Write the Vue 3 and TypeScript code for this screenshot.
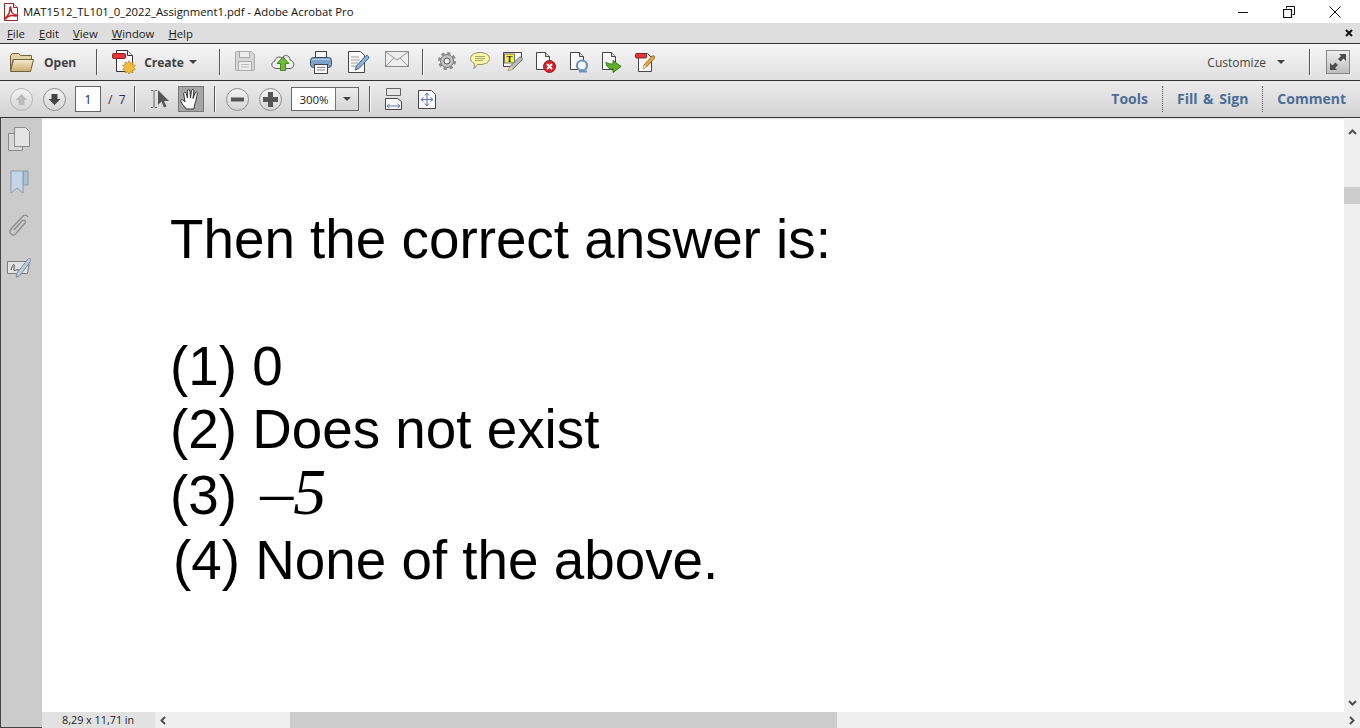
<template>
  <div class="app">
    <header class="titlebar">
      <svg class="title-icon" width="16" height="18" viewBox="0 0 16 18">
        <path d="M1.500 .5h9l4 4v13h-13z" fill="#fff" stroke="#8c2a2a" />
        <path d="M10.500 .5v4h4" fill="#f2dede" stroke="#8c2a2a" />
        <path d="M2 15c3-2 5-6 5-10 0-2 1-1 1 1 0 3 2 6 6 6 1 1-1 1-2 1-3-1-7 0-10 3z" fill="none" stroke="#c8201e" stroke-width="1.500" />
      </svg>
      <span class="title-text">MAT1512_TL101_0_2022_Assignment1.pdf - Adobe Acrobat Pro</span>
      <div class="win-controls">
        <svg width="12" height="12" viewBox="0 0 12 12"><path d="M1 6.500h10" stroke="#111" /></svg>
        <svg width="12" height="12" viewBox="0 0 12 12" fill="none" stroke="#111"><path d="M3.500 2.500v-2h8v8h-2" /><path d="M.5 3.500h8v8h-8z" stroke-width="1.200" /></svg>
        <svg width="12" height="12" viewBox="0 0 12 12"><path d="M.5 .5l11 11M11.500 .5l-11 11" stroke="#111" /></svg>
      </div>
    </header>

    <nav class="menubar">
      <span v-for="m in menus" :key="m.rest" class="menu-item"><u>{{ m.key }}</u>{{ m.rest }}</span>
      <svg class="menu-close" width="8" height="8" viewBox="0 0 8 8"><path d="M1 1l6 6M7 1L1 7" stroke="#111" stroke-width="2" /></svg>
    </nav>

    <div class="toolbar toolbar-main">
      <svg width="24" height="21" viewBox="0 0 24 21">
        <defs>
          <linearGradient id="folderFill" x1="0" y1="0" x2="0" y2="1"><stop offset="0" stop-color="#f4ead0" /><stop offset="1" stop-color="#c9ae6e" /></linearGradient>
        </defs>
        <path d="M.5 19V3.500l2-2h6l2 2h11v4H3z" fill="#e3d3a4" stroke="#6f6240" />
        <path d="M.5 19.500l3-12h20l-3 12z" fill="url(#folderFill)" stroke="#6f6240" />
      </svg>
      <span class="tb-label open-label">Open</span>
      <i class="sep sep-open"></i>
      <svg width="24" height="24" viewBox="0 0 24 24">
        <path d="M4.500 .5h11l5 5v16h-16z" fill="#fafafa" stroke="#333" />
        <path d="M15.500 .5v5h5" fill="#e8e8e8" stroke="#333" />
        <rect x=".5" y="3.500" width="13" height="5" rx="1" fill="#e4343c" stroke="#8e2027" />
        <polygon :points="star(17, 17.5, 6.8, 4.6, 10)" fill="#f2bb38" stroke="#a57c1e" stroke-width=".6" />
      </svg>
      <span class="tb-label create-label">Create</span>
      <i class="caret create-caret"></i>
      <i class="sep sep-create"></i>

      <div class="tool-group wide">
        <span class="tool">
          <svg width="20" height="20" viewBox="0 0 20 20"><path d="M.5 1.500a1 1 0 0 1 1-1h15l3 3v15a1 1 0 0 1-1 1h-17a1 1 0 0 1-1-1z" fill="#d6d6d6" stroke="#aaa" /><rect x="4.500" y=".5" width="10" height="6" fill="#ececec" stroke="#aaa" /><rect x="3.500" y="10.500" width="13" height="9" fill="#ececec" stroke="#aaa" /><path d="M6 13.500h8M6 16h8" stroke="#bbb" /></svg>
        </span>
        <span class="tool">
          <svg width="24" height="20" viewBox="0 0 24 20"><path d="M6 17.500c-6 0-7-6-2-7.500 0-4 5-5 7-3 2-4 8-3 8 2 5 1 5 8.500 0 8.500z" fill="#f0f0f0" stroke="#5c5c5c" /><path d="M12 6l6 6.500h-3.500v7h-5v-7H6z" fill="#73bb35" stroke="#3f8a1d" /></svg>
        </span>
        <span class="tool">
          <svg width="22" height="23" viewBox="0 0 22 23"><rect x="5.500" y=".5" width="11" height="8" fill="#f7f7f7" stroke="#444" /><rect x=".5" y="6.500" width="21" height="10" rx="3" fill="#7da3c8" stroke="#3c4f68" /><path d="M2 8.500h18" stroke="#b6d0e6" /><rect x="4.500" y="13.500" width="13" height="9" fill="#fafafa" stroke="#444" /><path d="M7 16.500h8M7 19h8" stroke="#888" /></svg>
        </span>
        <span class="tool">
          <svg width="22" height="22" viewBox="0 0 22 22"><path d="M.5 .5h12l4 4v17H.5z" fill="#fafafa" stroke="#444" /><path d="M3 6h8M3 9h9M3 12h7M3 15h5" stroke="#999" /><path d="M7 19l1.500-4 9-10c2-1.500 4 .5 3 2.500l-9.500 10z" fill="#8fb2da" stroke="#2e4a70" stroke-width=".8" /></svg>
        </span>
        <span class="tool">
          <svg width="24" height="16" viewBox="0 0 24 16"><rect x=".5" y=".5" width="23" height="15" fill="#eee" stroke="#8a8a8a" /><path d="M1 1l11 8 11-8M1 15l8-8M23 15l-8-8" fill="none" stroke="#999" /></svg>
        </span>
      </div>
      <i class="sep sep-tools"></i>

      <div class="tool-group">
        <span class="tool">
          <svg width="18" height="18" viewBox="0 0 18 18"><circle cx="9" cy="9" r="6.500" fill="#c4c4c4" stroke="#707070" /><circle cx="9" cy="9" r="7.500" fill="none" stroke="#8a8a8a" stroke-width="3" stroke-dasharray="3.200 2.690" /><circle cx="9" cy="9" r="3" fill="#f0f0f0" stroke="#5a5a5a" /></svg>
        </span>
        <span class="tool">
          <svg width="20" height="18" viewBox="0 0 20 18"><path d="M10 .5c5.500 0 9.500 2.500 9.500 6S15.500 12.500 10 12.500c-1 0-2 0-2.500-.2-.8 1.800-2 3.500-4 4.200 1-1.500 1-3.200.8-5C2 10.500.5 8.500.5 6.500.5 3 4.500.5 10 .5z" fill="#fbf7a8" stroke="#8c8b6a" /><path d="M5 4.500h10M5 6.500h10M5 8.500h8" stroke="#a5a46a" /></svg>
        </span>
        <span class="tool">
          <svg width="20" height="19" viewBox="0 0 20 19"><path d="M.5 .5h18v6l-7 8H.5z" fill="#fafafa" stroke="#444" /><rect x="1.500" y="2" width="10" height="9" fill="#f9f230" stroke="#777" /><text class="t-glyph" x="6.500" y="9.500" text-anchor="middle">T</text><path d="M5 18.500l2-4 9-9c2-1.500 4 .5 3 2.500l-9 9z" fill="#bbb" stroke="#555" stroke-width=".8" /><path d="M5 18.500l2-4 3 2.500z" fill="#f4dc7c" /></svg>
        </span>
        <span class="tool">
          <svg width="20" height="21" viewBox="0 0 20 21"><path d="M.5 .5h9l4 4v13H.5z" fill="#fafafa" stroke="#444" /><path d="M9.500 .5v4h4" fill="#ddd" stroke="#444" /><circle cx="13.500" cy="14.500" r="6" fill="#d8222a" stroke="#8e1a1e" /><path d="M11 12l5 5M16 12l-5 5" stroke="#fff" stroke-width="1.800" /></svg>
        </span>
        <span class="tool">
          <svg width="19" height="21" viewBox="0 0 19 21"><path d="M.5 .5h9l4 4v13H.5z" fill="#fafafa" stroke="#444" /><path d="M9.500 .5v4h4" fill="#ddd" stroke="#444" /><circle cx="12" cy="13.500" r="5" fill="#f4f8fc" stroke="#6a93b8" stroke-width="2.200" /><path d="M9 19.500h2.500l.5-2 .5 2H17" fill="none" stroke="#6a93b8" stroke-width="1.800" /></svg>
        </span>
        <span class="tool">
          <svg width="20" height="21" viewBox="0 0 20 21"><path d="M.5 .5h9l4 4v13H.5z" fill="#fafafa" stroke="#444" /><path d="M9.500 .5v4h4" fill="#ddd" stroke="#444" /><path d="M4 10c0 5 3 7 7 7v3.500l8-6-8-6V12C8 12 6 12 4 10z" fill="#63ad2e" stroke="#3b7a1a" /></svg>
        </span>
        <span class="tool">
          <svg width="20" height="20" viewBox="0 0 20 20"><path d="M3.500 1.500h9l4 4v14h-13z" fill="#fafafa" stroke="#444" /><rect x=".5" y="1.500" width="11" height="4.500" rx="1" fill="#e4343c" stroke="#8e2027" /><path d="M8 17l1-4 8-9c1.500-1 3.500 .5 2.500 2l-8 9z" fill="#eda63a" stroke="#8a5a1e" stroke-width=".8" /><path d="M8 17l1-4 2.500 2z" fill="#f7e3b8" /></svg>
        </span>
      </div>

      <span class="customize">Customize</span>
      <i class="caret customize-caret"></i>
      <i class="sep sep-expand"></i>
      <span class="expand-box">
        <svg width="18" height="18" viewBox="0 0 18 18" fill="#4c4c4c"><path d="M10 1h7v7l-2.500-2.500-3 3-2.500-2.500 3-3zM8 17H1v-7l2.500 2.500 3-3 2.500 2.500-3 3z" /></svg>
      </span>
    </div>

    <div class="toolbar toolbar-nav">
      <span class="round disabled">
        <svg width="13" height="13" viewBox="0 0 13 13"><path d="M6.500 1l6 6H9.500v5h-6V7H.5z" fill="#bbb" /></svg>
      </span>
      <span class="round round-down">
        <svg width="13" height="13" viewBox="0 0 13 13"><path d="M6.500 12l6-6H9.500V1h-6v5H.5z" fill="#444" /></svg>
      </span>
      <span class="page-input">1</span>
      <span class="page-total">/&nbsp; 7</span>
      <i class="sep sep-page"></i>
      <svg class="select-icon" width="19" height="20" viewBox="0 0 19 20">
        <path d="M1 1.500h2l1 1 1-1h2M4 2.500v15M1 18.500h2l1-1 1 1h2" fill="none" stroke="#666" />
        <path d="M8 1v15l3.500-3.500 2.500 6 2.500-1-2.500-5.500h5z" fill="#555" />
      </svg>
      <span class="hand-box">
        <svg width="22" height="22" viewBox="0 0 22 22"><path d="M6 21c-1-2-4-5-5.200-7.500-.6-1.600 1.200-2.500 2.400-1.300L5 14 3.700 6c-.3-1.800 2-2.300 2.500-.5L7.500 10 7.300 3c0-1.800 2.500-1.800 2.600 0l.6 7 1-7.500c.3-1.700 2.600-1.300 2.400.4L13 10.500l2-5.500c.6-1.600 2.800-.8 2.300.8C16.500 9.500 16 13 15 15.500c-.5 2-1 3.500-1 5.500z" fill="#fdfdfd" stroke="#333" /></svg>
      </span>
      <i class="sep sep-hand"></i>
      <span class="round">
        <svg width="13" height="13" viewBox="0 0 13 13"><rect y="4.500" width="13" height="4" fill="#555" /></svg>
      </span>
      <span class="round round-plus">
        <svg width="15" height="15" viewBox="0 0 15 15"><path d="M5 0h5v5h5v5h-5v5H5v-5H0V5h5z" fill="#555" /></svg>
      </span>
      <span class="zoom-combo">
        <span class="zoom-value">300%</span>
        <span class="zoom-btn"><i class="caret"></i></span>
      </span>
      <i class="sep sep-zoom"></i>
      <svg class="fit-page" width="17" height="22" viewBox="0 0 17 22">
        <path d="M1.500 .5h14v7h-14z" fill="#e6e6e6" stroke="#444" stroke-width=".8" />
        <path d="M.5 10.500h12l4 3v8H.5z" fill="#f8f8f8" stroke="#444" />
        <path d="M2 18h13M2 18l2.500-2M2 18l2.500 2M15 18l-2.500-2M15 18l-2.500 2" fill="none" stroke="#5d78b8" />
      </svg>
      <svg class="fit-full" width="18" height="19" viewBox="0 0 18 19">
        <path d="M.5 .5h13l4 4v14H.5z" fill="#fafafa" stroke="#444" />
        <path d="M9 3v13M3 9.500h12M9 3L7 5.500M9 3l2 2.500M9 16l-2-2.500M9 16l2-2.500M3 9.500l2.500-2M3 9.500l2.500 2M15 9.500l-2.500-2M15 9.500l-2.500 2" fill="none" stroke="#5d78b8" />
      </svg>
      <div class="panes">
        <span class="pane">Tools</span>
        <span class="pane dotted fill-sign">Fill &amp; Sign</span>
        <span class="pane dotted">Comment</span>
      </div>
    </div>

    <div class="workspace">
      <aside class="sidebar">
        <svg width="22" height="24" viewBox="0 0 22 24"><path d="M.5 6.500h14v17H.5z" fill="#d8d8d8" stroke="#8a8a8a" /><path d="M6.500 .5h11l4 4v15h-15z" fill="#e4e4e4" stroke="#8a8a8a" /></svg>
        <svg width="19" height="24" viewBox="0 0 19 24"><path d="M13 1h5v14h-5z" fill="#a9bfd2" stroke="#8a9aa8" /><path d="M1 1h12v22l-6-5-6 5z" fill="#c4d6e6" stroke="#8a9aa8" /></svg>
        <svg width="22" height="24" viewBox="0 0 22 24" fill="none" stroke="#8e8e8e" stroke-width="1.400"><path d="M20 4c-1.500-2.500-4-2.500-6 0L3 16c-3 4 1.500 8 5 4.500L17 10c1.500-2-1-4-3-2l-8 9" /></svg>
        <svg width="24" height="23" viewBox="0 0 24 23"><path d="M.5 5.500h22l-2 12H.5z" fill="#e2e2e2" stroke="#7d7d7d" /><path d="M4 14c2-7 4-7 3-2s2 1 3 2H15" fill="none" stroke="#444" /><path d="M9 21l1-4 11-14c2-1.500 4 .5 2.500 2.500L12.500 20z" fill="#b6cde2" stroke="#7d8c9c" /></svg>
      </aside>

      <main class="page">
        <p class="doc-line heading">Then the correct answer is:</p>
        <p class="doc-line first">(1) 0</p>
        <p class="doc-line second">(2) Does not exist</p>
        <p class="doc-line third">(3) <span class="math"><span class="math-dash">–</span><em>5</em></span></p>
        <p class="doc-line nudged">(4) None of the above.</p>
      </main>

      <div class="v-scroll">
        <svg class="arrow" width="9" height="6" viewBox="0 0 9 6"><path d="M1 5l3.500-3.500L8 5" fill="none" stroke="#505050" stroke-width="2" /></svg>
        <span class="v-thumb"></span>
        <svg class="arrow arrow-end" width="9" height="6" viewBox="0 0 9 6"><path d="M1 1l3.500 3.500L8 1" fill="none" stroke="#505050" stroke-width="2" /></svg>
      </div>
    </div>

    <footer class="bottom">
      <span class="side-foot"></span>
      <span class="page-size">8,29 x 11,71 in</span>
      <div class="h-scroll">
        <svg width="6" height="9" viewBox="0 0 6 9"><path d="M5 1L1.500 4.500 5 8" fill="none" stroke="#505050" stroke-width="2" /></svg>
        <span class="h-thumb"></span>
        <svg class="arrow-end" width="6" height="9" viewBox="0 0 6 9"><path d="M1 1l3.500 3.500L1 8" fill="none" stroke="#505050" stroke-width="2" /></svg>
      </div>
    </footer>
  </div>
</template>

<script setup lang="ts">
const menus = [
  { key: 'F', rest: 'ile' },
  { key: 'E', rest: 'dit' },
  { key: 'V', rest: 'iew' },
  { key: 'W', rest: 'indow' },
  { key: 'H', rest: 'elp' },
]

// points for the little starburst on the Create icon
function star(cx: number, cy: number, outer: number, inner: number, n: number) {
  const pts: string[] = []
  for (let i = 0; i < n * 2; i++) {
    const r = i % 2 ? inner : outer
    const a = (Math.PI * i) / n
    pts.push(`${(cx + r * Math.sin(a)).toFixed(2)},${(cy - r * Math.cos(a)).toFixed(2)}`)
  }
  return pts.join(' ')
}
</script>

<style>
html,
body {
  margin: 0;
  overflow: hidden;
  background: #fff;
}
</style>

<style scoped>
.app {
  display: flex;
  flex-direction: column;
  height: 728px;
  font-family: 'Open Sans', 'Noto Sans', sans-serif;
  font-size: 12px;
  color: #1a1a1a;
  overflow: hidden;
}

.titlebar {
  flex: 0 0 23px;
  display: flex;
  align-items: center;
  background: #fff;
  padding-left: 3px;
}

.title-text {
  margin-left: 4px;
  font-size: 11.3px;
  color: #111;
  white-space: nowrap;
}

.win-controls {
  margin-left: auto;
  display: flex;
  gap: 34px;
  padding-right: 19px;
}

.menubar {
  flex: 0 0 20px;
  display: flex;
  align-items: center;
  background: #dedede;
  padding-left: 7px;
  gap: 14px;
  font-size: 11.3px;
}

.menu-close {
  margin-left: auto;
  margin-right: 7px;
}

.toolbar {
  display: flex;
  align-items: center;
  box-sizing: border-box;
  border-top: 1px solid #333;
}

.toolbar-main {
  flex: 0 0 37px;
  padding-left: 10px;
  background: linear-gradient(#f6f6f6, #dfdfdf);
}

.toolbar-nav {
  flex: 0 0 38px;
  padding-left: 10px;
  background: linear-gradient(#ececec, #d3d3d3);
  border-bottom: 1px solid #333;
}

.tb-label {
  font-weight: 700;
  color: #404040;
}

.open-label {
  margin-left: 10px;
}

.create-label {
  margin-left: 8px;
}

.sep {
  width: 1px;
  height: 26px;
  background: #555;
  box-shadow: 1px 0 0 #fafafa;
  margin: 0 15px;
}

.sep-open {
  margin: 0 15px 0 20px;
}

.sep-create {
  margin-right: 6px;
}

.sep-tools {
  margin: 0 8px 0 6px;
}

.caret {
  width: 0;
  height: 0;
  border: 4px solid transparent;
  border-top: 4px solid #444;
  border-bottom: 0;
}

.create-caret {
  margin-left: 5px;
  margin-right: 7px;
}

.tool-group {
  display: flex;
}

.tool {
  width: 33px;
  display: flex;
  justify-content: center;
}

.tool-group.wide .tool {
  width: 38px;
}

.t-glyph {
  font-family: 'Liberation Serif', serif;
  font-size: 9px;
  font-weight: 700;
  fill: #222;
}

.customize {
  margin-left: auto;
  color: #444;
  font-size: 12px;
}

.customize-caret {
  margin-left: 11px;
}

.sep-expand {
  margin: 0 16px 0 24px;
}

.expand-box {
  width: 24px;
  height: 24px;
  box-sizing: border-box;
  display: flex;
  align-items: center;
  justify-content: center;
  border: 1px solid #888;
  background: linear-gradient(#eee, #bdbdbd);
  margin-right: 10px;
}

.round {
  width: 23px;
  height: 23px;
  box-sizing: border-box;
  border: 1px solid #8e8e8e;
  border-radius: 50%;
  background: linear-gradient(#f4f4f4, #d4d4d4);
  display: flex;
  align-items: center;
  justify-content: center;
}

.round.disabled {
  border-color: #b4b4b4;
}

.round-down {
  margin-left: 10px;
}

.page-input {
  width: 26px;
  height: 26px;
  box-sizing: border-box;
  border: 1px solid #666;
  background: #fff;
  margin-left: 9px;
  display: flex;
  align-items: center;
  justify-content: center;
}

.page-total {
  margin-left: 7px;
  color: #333;
}

.sep-page {
  margin: 0 15px 0 8px;
}

.hand-box {
  width: 26px;
  height: 26px;
  box-sizing: border-box;
  border: 1px solid #777;
  background: #a6a6a6;
  margin-left: 9px;
  display: flex;
  align-items: center;
  justify-content: center;
}

.sep-hand {
  margin: 0 11px 0 10px;
}

.round-plus {
  margin-left: 10px;
}

.zoom-combo {
  display: flex;
  width: 68px;
  height: 24px;
  box-sizing: border-box;
  border: 1px solid #666;
  margin-left: 9px;
  background: #fff;
  font-size: 11.5px;
}

.zoom-value {
  flex: 1;
  display: flex;
  align-items: center;
  justify-content: center;
  padding-left: 2px;
}

.zoom-btn {
  width: 22px;
  display: flex;
  align-items: center;
  justify-content: center;
  background: linear-gradient(#ececec, #d6d6d6);
  border-left: 1px solid #777;
}

.sep-zoom {
  margin: 0 15px 0 10px;
}

.fit-full {
  margin-left: 16px;
}

.panes {
  margin-left: auto;
  display: flex;
  align-items: center;
  height: 100%;
  font-size: 14px;
  font-weight: 700;
  color: #4c6e96;
}

.pane {
  padding: 0 14px 2px;
  box-sizing: border-box;
  height: 26px;
  display: flex;
  align-items: center;
}

.pane.dotted {
  border-left: 1px dotted #555;
}

.fill-sign {
  word-spacing: 2px;
}

.workspace {
  flex: 1;
  display: flex;
  min-height: 0;
}

.sidebar {
  width: 42px;
  box-sizing: border-box;
  background: #cbcbcb;
  border-left: 1px solid #444;
  display: flex;
  flex-direction: column;
  align-items: center;
  padding: 9px 5px 0 0;
  gap: 19px;
}

.page {
  flex: 1;
  background: #fff;
  box-shadow: inset 0 2px 2px -1px #ddd;
  padding: 88px 0 0 128px;
  font-family: 'Liberation Sans', Arial, sans-serif;
  font-size: 54.8px;
  color: #000;
  white-space: nowrap;
}

.doc-line {
  margin: 0;
  height: 66px;
  line-height: 66px;
}

.doc-line.first {
  margin-top: 61px;
  height: 63px;
}

.doc-line.third {
  height: 65px;
}

.doc-line.nudged {
  padding-left: 3px;
}

.math {
  font-family: 'Liberation Serif', serif;
  font-size: 66px;
  line-height: 0;
  margin-left: 8px;
}

.math em {
  font-style: italic;
}

.v-scroll {
  width: 16px;
  background: #efefef;
  display: flex;
  flex-direction: column;
  align-items: center;
  padding-top: 11px;
}

.v-thumb {
  width: 16px;
  height: 17px;
  background: #cdcdcd;
  margin-top: 52px;
}

.v-scroll .arrow-end {
  margin-top: auto;
  margin-bottom: 6px;
}

.bottom {
  flex: 0 0 16px;
  display: flex;
}

.side-foot {
  width: 42px;
  box-sizing: border-box;
  background: #cbcbcb;
  border-left: 1px solid #444;
  border-bottom: 1px solid #444;
}

.page-size {
  width: 113px;
  background: #e2e2e2;
  font-size: 10.8px;
  line-height: 16px;
  padding-left: 20px;
  box-sizing: border-box;
}

.h-scroll {
  flex: 1;
  background: #efefef;
  display: flex;
  align-items: center;
  padding: 0 5px;
}

.h-thumb {
  width: 547px;
  height: 16px;
  background: #cdcdcd;
  margin-left: 124px;
}

.h-scroll .arrow-end {
  margin-left: auto;
}
</style>
